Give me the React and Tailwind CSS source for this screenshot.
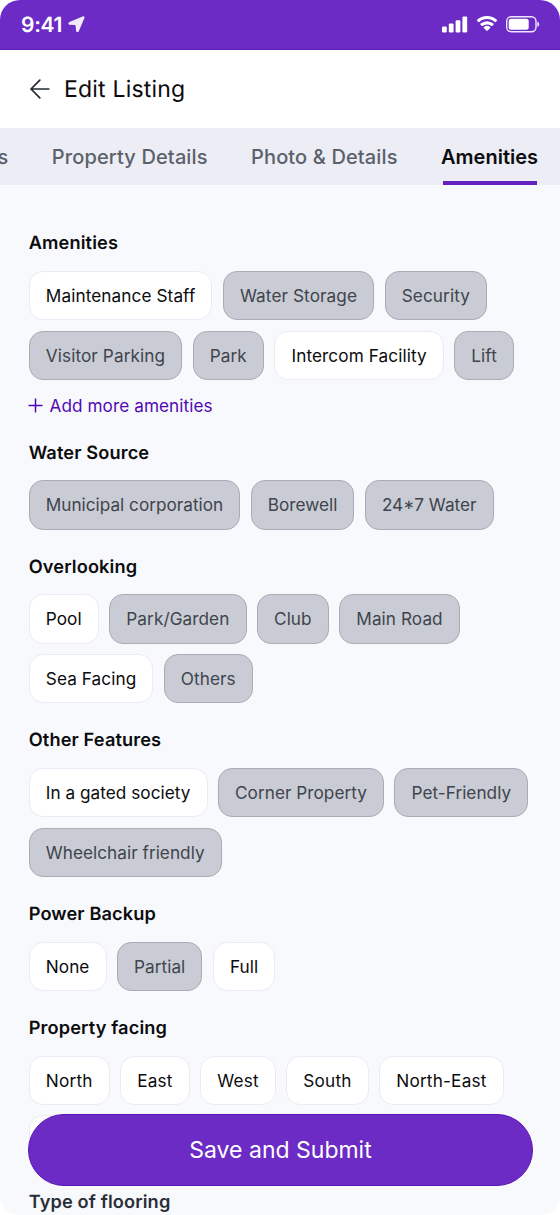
import { useState } from 'react';
import { clsx } from 'clsx';

const tabs = ['Property Details', 'Photo & Details', 'Amenities'];

const sections = [
  {
    title: 'Amenities',
    options: ['Maintenance Staff', 'Water Storage', 'Security', 'Visitor Parking', 'Park', 'Intercom Facility', 'Lift'],
    addLabel: 'Add more amenities',
    tracking: 'tracking-[0.09px]',
  },
  { title: 'Water Source', options: ['Municipal corporation', 'Borewell', '24*7 Water'] },
  {
    title: 'Overlooking',
    options: ['Pool', 'Park/Garden', 'Club', 'Main Road', 'Sea Facing', 'Others'],
    tracking: 'tracking-[0.07px]',
  },
  {
    title: 'Other Features',
    options: ['In a gated society', 'Corner Property', 'Pet-Friendly', 'Wheelchair friendly'],
    tracking: 'tracking-[0.03px]',
  },
  { title: 'Power Backup', options: ['None', 'Partial', 'Full'], tracking: 'tracking-[0.05px]' },
  {
    title: 'Property facing',
    options: ['North', 'East', 'West', 'South', 'North-East', 'North-West'],
    tracking: 'tracking-[0.2px]',
  },
];

const initialSelected = [
  'Water Storage', 'Security', 'Visitor Parking', 'Park', 'Lift',
  'Municipal corporation', 'Borewell', '24*7 Water',
  'Park/Garden', 'Club', 'Main Road', 'Others',
  'Corner Property', 'Pet-Friendly', 'Wheelchair friendly',
  'Partial',
];

function StatusBar() {
  return (
    <div className="h-[50px] shrink-0 flex items-center justify-between pl-[21px] pr-[20px] bg-[#6b2bc4] border-b border-[#5c1cb4] text-white">
      <div className="flex items-center gap-[6px]">
        <span className="text-[21px] leading-6 pt-[2px] font-semibold tracking-[-0.3px]">9:41</span>
        <svg width="17" height="17" viewBox="0 0 17 17" fill="#f1eafa">
          <path d="M1.5 6 14.6.4c1.2-.5 2.3.5 1.8 1.7l-5.6 13.2c-.6 1.4-2.5 1.2-2.7-.2L7.6 9.7a.8.8 0 0 0-.7-.7L1.7 8.7C.2 8.5 0 6.6 1.5 6Z" />
        </svg>
      </div>
      <div className="flex items-center gap-[8px]">
        <svg width="26" height="17" viewBox="0 0 26 17" fill="#fff">
          <rect x="0" y="10.5" width="4.8" height="6" rx="1.2" />
          <rect x="6.8" y="7.5" width="4.8" height="9" rx="1.2" />
          <rect x="13.6" y="4.2" width="4.8" height="12.3" rx="1.2" />
          <rect x="20.4" y="0.5" width="4.8" height="16" rx="1.2" />
        </svg>
        <svg width="22" height="17" viewBox="0 0 22 17" fill="#fff">
          <path d="M11 3.1c3 0 5.8 1.1 7.9 3.1.2.2.5.2.6 0l1.6-1.6c.2-.2.2-.5 0-.7C18.4 1.4 14.8 0 11 0S3.6 1.4.9 3.9c-.2.2-.2.5 0 .7l1.6 1.6c.2.2.4.2.6 0C5.2 4.2 8 3.1 11 3.1Z" />
          <path d="M11 8.4c1.6 0 3.2.6 4.4 1.7.2.2.5.2.7 0l1.6-1.6c.2-.2.2-.5 0-.7a9.9 9.9 0 0 0-13.4 0c-.2.2-.2.5 0 .7l1.6 1.6c.2.2.5.2.7 0A6.5 6.5 0 0 1 11 8.4Z" />
          <path d="M14.2 11.9c.2-.2.2-.5 0-.7a5 5 0 0 0-6.4 0c-.2.2-.2.5 0 .7l2.8 2.9c.2.2.6.2.8 0l2.8-2.9Z" />
        </svg>
        <svg width="34" height="17" viewBox="0 0 34 17">
          <rect x="0.7" y="0.7" width="29.3" height="15" rx="4.5" fill="none" stroke="#efe6fa" strokeWidth="1.4" />
          <rect x="2.7" y="2.7" width="20" height="11" rx="2.5" fill="#fff" />
          <path d="M31.3 5.5v5.6c1.1-.5 1.9-1.5 1.9-2.8s-.8-2.3-1.9-2.8Z" fill="#efe6fa" />
        </svg>
      </div>
    </div>
  );
}

function Chip({ label, selected, onClick }) {
  return (
    <button
      onClick={onClick}
      className={clsx(
        'h-[49.4px] px-[16.1px] pt-px rounded-[14px] border text-[17.2px] whitespace-nowrap',
        selected ? 'bg-[#c9ccd4] border-[#a9acb5] text-[#3f444d]' : 'bg-white border-[#ebebf5] text-[#0c0c0e]'
      )}
    >
      {label}
    </button>
  );
}

function Section({ section, selected, onToggle }) {
  return (
    <section className="mb-[25.1px]">
      <h2 className="mb-[15.5px] text-[18.2px] leading-6 font-semibold tracking-[0.13px] text-[#0c0c0e]">{section.title}</h2>
      <div className={clsx('flex flex-wrap gap-[10.4px]', section.tracking)}>
        {section.options.map((option) => (
          <Chip
            key={option}
            label={option}
            selected={selected.includes(option)}
            onClick={() => onToggle(option)}
          />
        ))}
      </div>
      {section.addLabel && (
        <button className="mt-[13.8px] -mb-[2.2px] -ml-px flex items-center gap-[6.8px] text-[17.2px] leading-6 tracking-[0.06px] text-[#5009b5]">
          <svg width="15" height="15" viewBox="0 0 15 15" stroke="currentColor" strokeWidth="1.5">
            <path d="M7.5.5v14M.5 7.5h14" />
          </svg>
          {section.addLabel}
        </button>
      )}
    </section>
  );
}

export default function App() {
  const [selected, setSelected] = useState(initialSelected);
  const [activeTab, setActiveTab] = useState('Amenities');

  const toggle = (option) => {
    setSelected((prev) =>
      prev.includes(option) ? prev.filter((o) => o !== option) : [...prev, option]
    );
  };

  return (
    <div className="bg-white">
      <div className="relative w-[560px] h-[1215px] flex flex-col overflow-hidden rounded-[20px] bg-[#f8f9fc] font-['Inter',sans-serif] [text-rendering:geometricPrecision]">
        <StatusBar />

        <header className="h-[78px] shrink-0 flex items-center gap-[14px] px-[30px] bg-white">
          <svg width="20" height="20" viewBox="0 0 20 20" fill="none" stroke="#242a33" strokeWidth="1.7" strokeLinecap="round" strokeLinejoin="round">
            <path d="M18.8 10H1M9.8 1.2 1 10l8.8 8.8" />
          </svg>
          <h1 className="text-[23px] leading-8 tracking-[0.2px] text-[#0c0c0e]">Edit Listing</h1>
        </header>

        {/* Tabs, scrolled to the end */}
        <nav className="h-[57px] shrink-0 flex justify-end gap-[43.5px] pr-[22px] bg-[#ecedf5] text-[20px] font-medium whitespace-nowrap">
          <span className="h-full flex items-center tracking-[0.1px] text-[#5b616b]">Basic Details</span>
          {tabs.map((tab) => (
            <button
              key={tab}
              onClick={() => setActiveTab(tab)}
              className={clsx(
                'h-full flex flex-col',
                activeTab === tab ? 'font-semibold text-[#0c0c0e]' : 'tracking-[0.12px] text-[#5b616b]'
              )}
            >
              <span className="flex-1 flex items-center">{tab}</span>
              {activeTab === tab && <span className="h-1 -mt-1 ml-[2px] mr-px self-stretch bg-[#6321c0]" />}
            </button>
          ))}
        </nav>

        <main className="shrink-0 px-[28.7px] pt-[46.3px]">
          {sections.map((section) => (
            <Section key={section.title} section={section} selected={selected} onToggle={toggle} />
          ))}
          <h2 className="text-[18.2px] leading-6 font-semibold tracking-[0.13px] text-[#2a2e37]">Type of flooring</h2>
        </main>

        <button className="absolute left-[28px] top-[1114px] w-[505px] h-[72px] rounded-full bg-[#6b2bc4] border border-[#5a13b5] pt-px text-[23px] text-white">
          Save and Submit
        </button>
      </div>
    </div>
  );
}
